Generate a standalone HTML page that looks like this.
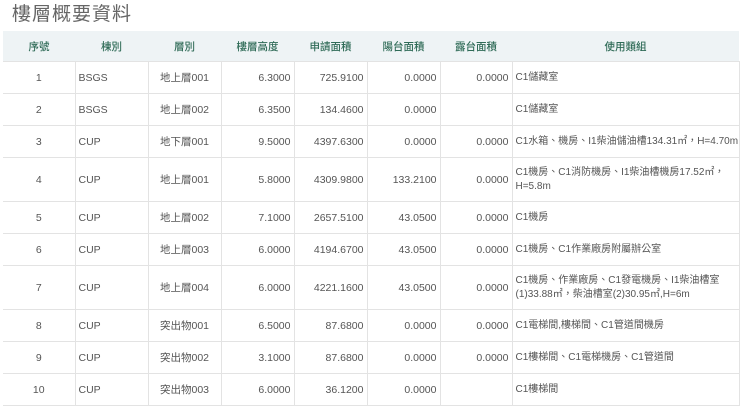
<!DOCTYPE html>
<html><head><meta charset="utf-8"><style>
body{margin:0;background:#fff;font-family:"Liberation Sans","Noto Sans CJK TC",sans-serif;width:740px;height:408px;overflow:hidden}
h1{margin:0;position:absolute;left:12px;top:-1px;font-size:19px;font-weight:400;color:#666;letter-spacing:1px;font-family:"Noto Sans CJK TC",sans-serif}
table{position:absolute;left:3px;top:31px;border-collapse:collapse;table-layout:fixed;width:736px;font-size:10.5px;color:#555}
th{background:#eef3f5;color:#2f6b57;font-weight:500;height:30px;padding:0;font-family:"Noto Sans CJK TC",sans-serif;font-size:10.5px;border:none}
td{border:1px solid #e3e3e3;padding:0 3px;height:31px;line-height:14px}
td:last-child{padding-right:0;font-size:10px}
tr.t td{height:43px}
td.c{text-align:center}td.r{text-align:right}td.l{text-align:left}
tr:first-child td{border-top:none}
td:first-child{border-left:none}
.nw{white-space:nowrap}
</style></head><body>
<h1>樓層概要資料</h1>
<table>
<colgroup><col style="width:72px"><col style="width:73px"><col style="width:73px"><col style="width:73px"><col style="width:73px"><col style="width:73px"><col style="width:72px"><col style="width:227px"></colgroup>
<tr><th>序號</th><th>棟別</th><th>層別</th><th>樓層高度</th><th>申請面積</th><th>陽台面積</th><th>露台面積</th><th>使用類組</th></tr>
<tr><td class="c">1</td><td class="l">BSGS</td><td class="c">地上層001</td><td class="r">6.3000</td><td class="r">725.9100</td><td class="r">0.0000</td><td class="r">0.0000</td><td>C1儲藏室</td></tr>
<tr><td class="c">2</td><td class="l">BSGS</td><td class="c">地上層002</td><td class="r">6.3500</td><td class="r">134.4600</td><td class="r">0.0000</td><td class="r"></td><td>C1儲藏室</td></tr>
<tr><td class="c">3</td><td class="l">CUP</td><td class="c">地下層001</td><td class="r">9.5000</td><td class="r">4397.6300</td><td class="r">0.0000</td><td class="r">0.0000</td><td class="nw">C1水箱、機房、I1柴油儲油槽134.31㎡，H=4.70m</td></tr>
<tr class="t"><td class="c">4</td><td class="l">CUP</td><td class="c">地上層001</td><td class="r">5.8000</td><td class="r">4309.9800</td><td class="r">133.2100</td><td class="r">0.0000</td><td>C1機房、C1消防機房、I1柴油槽機房17.52㎡，<br>H=5.8m</td></tr>
<tr><td class="c">5</td><td class="l">CUP</td><td class="c">地上層002</td><td class="r">7.1000</td><td class="r">2657.5100</td><td class="r">43.0500</td><td class="r">0.0000</td><td>C1機房</td></tr>
<tr><td class="c">6</td><td class="l">CUP</td><td class="c">地上層003</td><td class="r">6.0000</td><td class="r">4194.6700</td><td class="r">43.0500</td><td class="r">0.0000</td><td>C1機房、C1作業廠房附屬辦公室</td></tr>
<tr class="t"><td class="c">7</td><td class="l">CUP</td><td class="c">地上層004</td><td class="r">6.0000</td><td class="r">4221.1600</td><td class="r">43.0500</td><td class="r">0.0000</td><td>C1機房、作業廠房、C1發電機房、I1柴油槽室<br>(1)33.88㎡，柴油槽室(2)30.95㎡,H=6m</td></tr>
<tr><td class="c">8</td><td class="l">CUP</td><td class="c">突出物001</td><td class="r">6.5000</td><td class="r">87.6800</td><td class="r">0.0000</td><td class="r">0.0000</td><td>C1電梯間,樓梯間、C1管道間機房</td></tr>
<tr><td class="c">9</td><td class="l">CUP</td><td class="c">突出物002</td><td class="r">3.1000</td><td class="r">87.6800</td><td class="r">0.0000</td><td class="r">0.0000</td><td>C1樓梯間、C1電梯機房、C1管道間</td></tr>
<tr><td class="c">10</td><td class="l">CUP</td><td class="c">突出物003</td><td class="r">6.0000</td><td class="r">36.1200</td><td class="r">0.0000</td><td class="r"></td><td>C1樓梯間</td></tr>
</table>
</body></html>
